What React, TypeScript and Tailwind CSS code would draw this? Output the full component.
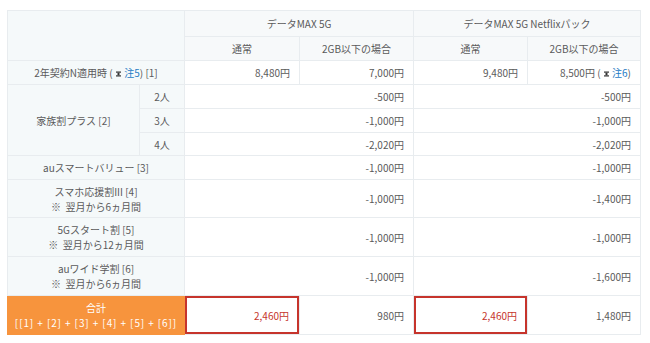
import React from "react";

const border = "border border-[#e8ecef]";
const labelCell = `${border} bg-[#f5f9fa] text-center align-middle`;
const headCell = `${border} bg-[#f7f9fa] text-center align-middle font-normal`;
const valCell = `${border} bg-white text-right align-middle pr-[9px]`;

const Note = ({ n }: { n: number }) => (
  <>
    {" ( "}
    <svg width="5" height="6" viewBox="0 0 5 6" className="inline-block align-middle mx-[1px]">
      <rect x="0" y="0.5" width="5" height="1.2" fill="#333" />
      <rect x="1.5" y="1.7" width="2" height="2.6" fill="#333" />
      <rect x="0" y="4.3" width="5" height="1.2" fill="#333" />
    </svg>
    {" "}
    <span className="text-[#1e7bc4]">注{n}</span>)
  </>
);

type Row = {
  label: React.ReactNode;
  h: string;
  a: string;
  b: string;
};

const rows: Row[] = [
  { label: "auスマートバリュー [3]", h: "h-[24px]", a: "-1,000円", b: "-1,000円" },
  {
    label: (
      <>
        スマホ応援割III [4]
        <br />※&nbsp;&nbsp;翌月から6ヵ月間
      </>
    ),
    h: "h-[38px]",
    a: "-1,000円",
    b: "-1,400円",
  },
  {
    label: (
      <>
        5Gスタート割 [5]
        <br />※&nbsp;&nbsp;翌月から12ヵ月間
      </>
    ),
    h: "h-[39px]",
    a: "-1,000円",
    b: "-1,000円",
  },
  {
    label: (
      <>
        auワイド学割 [6]
        <br />※&nbsp;&nbsp;翌月から6ヵ月間
      </>
    ),
    h: "h-[39px]",
    a: "-1,000円",
    b: "-1,600円",
  },
];

export default function App() {
  return (
    <div
      className="w-[650px] h-[343px] bg-white pt-[10px] pl-[7px] text-[10px] leading-[15px] text-[#5a5a5a]"
      style={{ fontFamily: '"Noto Sans CJK JP", "Noto Sans", sans-serif' }}
    >
      <table className="border-collapse table-fixed w-[633px]">
        <colgroup>
          <col className="w-[132px]" />
          <col className="w-[45px]" />
          <col className="w-[115px]" />
          <col className="w-[114px]" />
          <col className="w-[114px]" />
          <col className="w-[113px]" />
        </colgroup>
        <tbody>
          {/* Header */}
          <tr className="h-[26px]">
            <th rowSpan={2} colSpan={2} className={labelCell} />
            <th colSpan={2} className={headCell}>データMAX 5G</th>
            <th colSpan={2} className={headCell}>データMAX 5G Netflixパック</th>
          </tr>
          <tr className="h-[24px]">
            <th className={headCell}>通常</th>
            <th className={headCell}>2GB以下の場合</th>
            <th className={headCell}>通常</th>
            <th className={headCell}>2GB以下の場合</th>
          </tr>

          {/* 2-year contract */}
          <tr className="h-[24px]">
            <td colSpan={2} className={labelCell}>
              2年契約N適用時
              <Note n={5} /> [1]
            </td>
            <td className={valCell}>8,480円</td>
            <td className={valCell}>7,000円</td>
            <td className={valCell}>9,480円</td>
            <td className={valCell}>
              8,500円
              <Note n={6} />
            </td>
          </tr>

          {/* Family discount */}
          <tr className="h-[24px]">
            <td rowSpan={3} className={labelCell}>家族割プラス [2]</td>
            <td className={labelCell}>2人</td>
            <td colSpan={2} className={valCell}>-500円</td>
            <td colSpan={2} className={valCell}>-500円</td>
          </tr>
          <tr className="h-[24px]">
            <td className={labelCell}>3人</td>
            <td colSpan={2} className={valCell}>-1,000円</td>
            <td colSpan={2} className={valCell}>-1,000円</td>
          </tr>
          <tr className="h-[23px]">
            <td className={labelCell}>4人</td>
            <td colSpan={2} className={valCell}>-2,020円</td>
            <td colSpan={2} className={valCell}>-2,020円</td>
          </tr>

          {rows.map((r, i) => (
            <tr key={i} className={r.h}>
              <td colSpan={2} className={labelCell}>{r.label}</td>
              <td colSpan={2} className={valCell}>{r.a}</td>
              <td colSpan={2} className={valCell}>{r.b}</td>
            </tr>
          ))}

          {/* Total */}
          <tr className="h-[39px]">
            <td colSpan={2} className="border border-[#f7943d] bg-[#f7943d] text-white text-center align-middle">
              合計
              <br />
              <span className="tracking-[0.9px]">[[1] + [2] + [3] + [4] + [5] + [6]]</span>
            </td>
            <td className="border border-[#e8ecef] p-0 align-middle">
              <div className="h-[38px] border-2 border-[#c6342c] flex items-center justify-end pr-[8px] text-[#c6342c]">
                2,460円
              </div>
            </td>
            <td className={valCell}>980円</td>
            <td className="border border-[#e8ecef] p-0 align-middle">
              <div className="h-[38px] border-2 border-[#c6342c] flex items-center justify-end pr-[8px] text-[#c6342c]">
                2,460円
              </div>
            </td>
            <td className={valCell}>1,480円</td>
          </tr>
        </tbody>
      </table>
    </div>
  );
}
